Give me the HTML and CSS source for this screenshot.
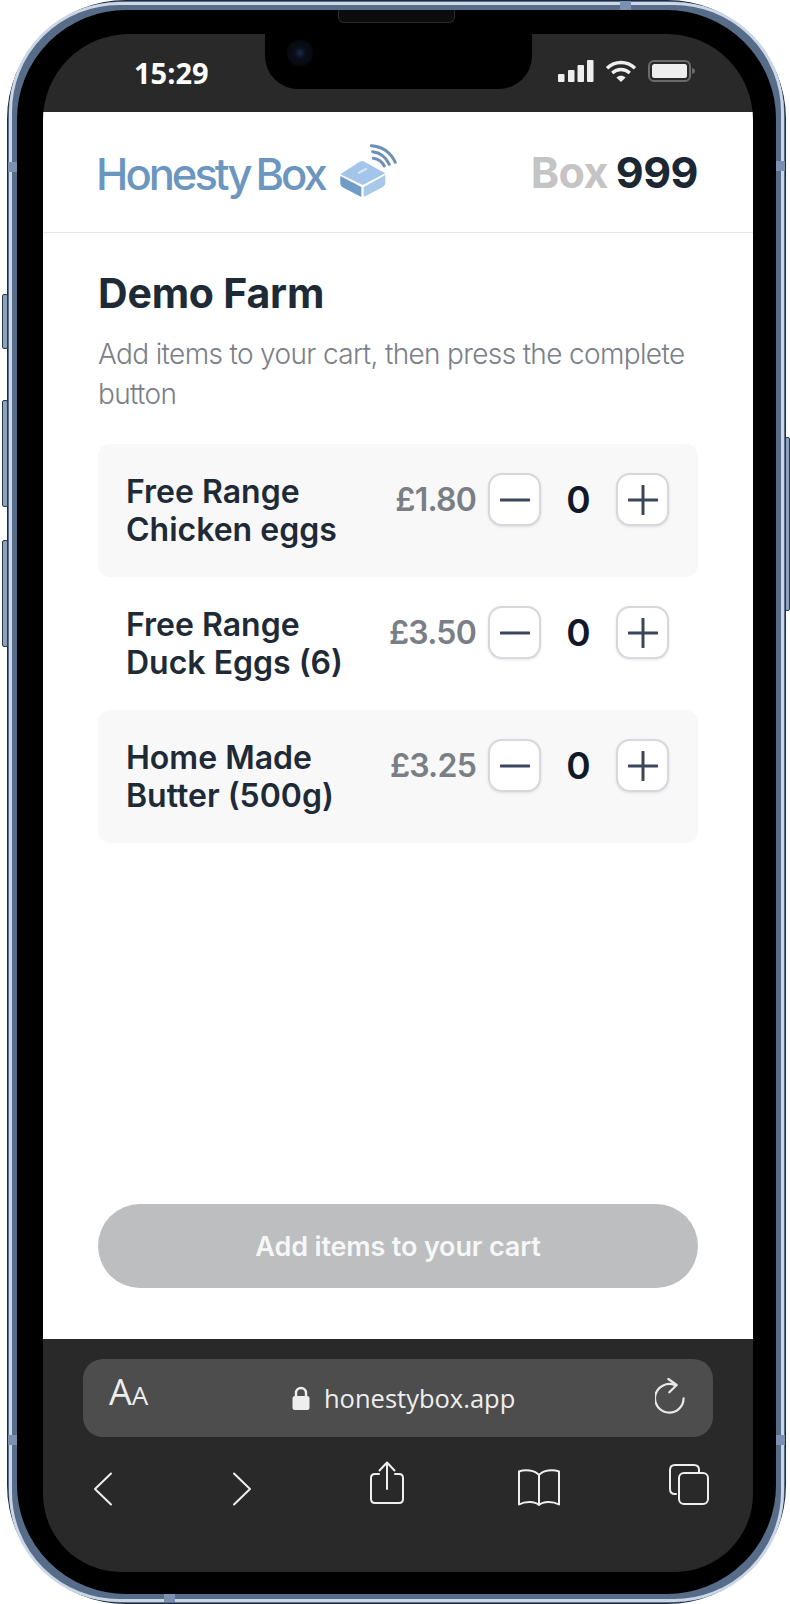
FILE: index.html
```html
<!DOCTYPE html>
<html lang="en">
<head>
  <meta charset="UTF-8">
  <title>Honesty Box</title>
  <link rel="stylesheet" href="styles.css">
</head>
<body>
  <div class="phone">
    <span class="side side-l1"></span>
    <span class="side side-l2"></span>
    <span class="side side-l3"></span>
    <span class="side side-r1"></span>
    <span class="band band-top"></span>
    <span class="band band-bottom"></span>
    <span class="band band-lt"></span>
    <span class="band band-lb"></span>
    <span class="band band-rt"></span>
    <span class="band band-rb"></span>
    <span class="speaker"></span>

    <div class="screen">
      <div class="status">
        <div class="status-left">15:29</div>
        <div class="notch"><span class="camera"></span></div>
        <div class="status-right">
          <svg width="36" height="22" viewBox="0 0 36 22" fill="#eeeeee">
            <rect x="0" y="14" width="6.5" height="8" rx="1"/>
            <rect x="10" y="10" width="6.5" height="12" rx="1"/>
            <rect x="19.5" y="5" width="6.5" height="17" rx="1"/>
            <rect x="29" y="0" width="6.5" height="22" rx="1"/>
          </svg>
          <svg width="32" height="22" viewBox="0 0 32 22" fill="none" stroke="#eeeeee" stroke-width="3.4">
            <path d="M2 8.2C10 0.6 22 0.6 30 8.2"/>
            <path d="M7.2 13C12.4 8.4 19.6 8.4 24.8 13"/>
            <path d="M16 22L11.4 17.4C14 15.2 18 15.2 20.6 17.4Z" fill="#eeeeee" stroke="none"/>
          </svg>
          <svg width="47" height="22" viewBox="0 0 47 22">
            <rect x="1" y="1" width="41" height="20" rx="5" fill="none" stroke="#6b6b6b" stroke-width="2"/>
            <rect x="4" y="4" width="35" height="14" rx="2.5" fill="#eeeeee"/>
            <path d="M44 8C46 8.5 47 9.6 47 11C47 12.4 46 13.5 44 14Z" fill="#6b6b6b"/>
          </svg>
        </div>
      </div>

      <div class="page">
        <header class="top">
          <div class="logo">
            <span class="logo-text">Honesty<span class="logo-gap">Box</span></span>
            <svg class="logo-mark" width="58" height="56" viewBox="-1 0 58 56">
              <path d="M-0.7 30.300L19 17.500Q21 16.500 23 17.500L44.300 29.300L21.700 41Z" fill="#a3c5ea"/>
              <path d="M-0.7 32L20.300 43V53L2 43.500Q-0.7 42 -0.7 39Z" fill="#6f9bc6"/>
              <path d="M22.700 43L44.300 31V39Q44.300 41.500 42 43L22.700 53Z" fill="#a9c9ea"/>
              <path d="M18 28.700L25 25" stroke="#d8e4f0" stroke-width="2.4" stroke-linecap="round"/>
              <g fill="none" stroke="#6d8fb3" stroke-width="3" stroke-linecap="round">
                <path d="M32.300 14.300Q40 15.500 43.300 22"/>
                <path d="M31.700 7.700Q43 9 48.300 20.300"/>
                <path d="M30.300 1.700Q47 3 54.300 18.300"/>
              </g>
            </svg>
          </div>
          <div class="box-id"><span class="box-word">Box</span> 999</div>
        </header>

        <main class="content">
          <h1 class="farm">Demo Farm</h1>
          <p class="hint">Add items to your cart, then press the complete button</p>

          <div class="items">
            <div class="item item-alt">
              <div class="item-name">Free Range Chicken eggs</div>
              <div class="item-price">£1.80</div>
              <button class="step"><svg width="30" height="30" viewBox="0 0 30 30"><path d="M1 15H29"/></svg></button>
              <div class="qty">0</div>
              <button class="step"><svg width="30" height="30" viewBox="0 0 30 30"><path d="M1 15H29M15 1V29"/></svg></button>
            </div>
            <div class="item">
              <div class="item-name">Free Range Duck Eggs (6)</div>
              <div class="item-price">£3.50</div>
              <button class="step"><svg width="30" height="30" viewBox="0 0 30 30"><path d="M1 15H29"/></svg></button>
              <div class="qty">0</div>
              <button class="step"><svg width="30" height="30" viewBox="0 0 30 30"><path d="M1 15H29M15 1V29"/></svg></button>
            </div>
            <div class="item item-alt">
              <div class="item-name">Home Made Butter (500g)</div>
              <div class="item-price">£3.25</div>
              <button class="step"><svg width="30" height="30" viewBox="0 0 30 30"><path d="M1 15H29"/></svg></button>
              <div class="qty">0</div>
              <button class="step"><svg width="30" height="30" viewBox="0 0 30 30"><path d="M1 15H29M15 1V29"/></svg></button>
            </div>
          </div>

          <button class="complete">Add items to your cart</button>
        </main>
      </div>

      <div class="browser">
        <div class="address">
          <div class="aa"><span class="aa-big">A</span><span class="aa-small">A</span></div>
          <div class="url">
            <svg width="18" height="24" viewBox="0 0 18 24">
              <path d="M4 11V7a5 5 0 0 1 10 0V11" fill="none" stroke="#eeeeee" stroke-width="2.4"/>
              <rect x="0.5" y="10" width="17" height="14" rx="2.5" fill="#eeeeee"/>
            </svg>
            <span>honestybox.app</span>
          </div>
          <svg width="32" height="40" viewBox="0 0 32 40" fill="none" stroke="#e8e8e8" stroke-width="2.2" stroke-linecap="round" stroke-linejoin="round">
            <path d="M20 7.200A14.300 14.300 0 1 0 28.600 20.300"/>
            <path d="M13.300 1L21.700 7L14.300 14.300"/>
          </svg>
        </div>
        <div class="tools">
          <svg class="tool-back" width="20" height="34" viewBox="0 0 20 34"><path d="M18 1.500L2 17L18 32.500"/></svg>
          <svg class="tool-forward" width="20" height="34" viewBox="0 0 20 34"><path d="M2 1.500L18 17L2 32.500"/></svg>
          <svg class="tool-share" width="36" height="44" viewBox="0 0 36 44"><path d="M18 28V2M10.500 9.500L18 1.500L25.500 9.500M10 13H6Q2 13 2 17V38Q2 42 6 42H30Q34 42 34 38V17Q34 13 30 13H26"/></svg>
          <svg class="tool-book" width="44" height="38" viewBox="0 0 44 38"><path d="M22 7C18 2 8 1 2 3.500V36.500C8 33 18 33 22 37C26 33 36 33 42 36.500V3.500C36 1 26 2 22 7ZM22 7V37"/></svg>
          <svg class="tool-tabs" width="40" height="41" viewBox="0 0 40 41"><path d="M7 30H6Q1 30 1 25V6Q1 1 6 1H25Q30 1 30 6V9"/><rect x="10" y="9" width="29" height="31" rx="5"/></svg>
        </div>
      </div>
    </div>
  </div>
</body>
</html>
```

FILE: styles.css
```css
html, body {
  width: 790px;
  height: 1604px;
  margin: 0;
  background: #ffffff;
  font-family: Inter, "Liberation Sans", sans-serif;
}

.phone {
  position: relative;
  box-sizing: border-box;
  width: 777px;
  height: 1602px;
  margin: 1px 0 0 8px;
  padding: 24px 23px 22px 26px;
  background: #000000;
  border: 9px solid #566c88;
  border-radius: 118px;
  box-shadow: 0 0 0 1px #1d2b3d;
}

.phone::before {
  content: "";
  position: absolute;
  top: -8px;
  left: -8px;
  right: -8px;
  bottom: -8px;
  border: 3px solid #cbd7e6;
  border-radius: 110px;
}

/* side buttons and antenna bands */
.side {
  position: absolute;
  width: 6px;
  background: #8ea1b9;
  border: 1px solid #2c3a4d;
  box-sizing: border-box;
  border-radius: 2px;
}

.side-l1 { left: -15px; top: 284px; height: 55px; }
.side-l2 { left: -15px; top: 390px; height: 107px; }
.side-l3 { left: -15px; top: 530px; height: 107px; }
.side-r1 { right: -14px; top: 427px; height: 174px; width: 5px; }

.band {
  position: absolute;
  background: #7c90b2;
}

.band-top { top: -9px; left: 603px; width: 11px; height: 9px; }
.band-bottom { bottom: -8px; left: 147px; width: 11px; height: 8px; }
.band-lt { left: -9px; top: 152px; width: 9px; height: 10px; }
.band-lb { left: -9px; top: 1425px; width: 9px; height: 10px; }
.band-rt { right: -9px; top: 151px; width: 9px; height: 10px; }
.band-rb { right: -9px; top: 1425px; width: 9px; height: 10px; }

.speaker {
  position: absolute;
  top: 0;
  left: 321px;
  width: 117px;
  height: 13px;
  background: #0c0c0c;
  border: 1px solid #2a2a2a;
  border-top: 0;
  border-radius: 0 0 6px 6px;
  box-sizing: border-box;
}

.screen {
  display: flex;
  flex-direction: column;
  width: 710px;
  height: 1538px;
  background: #292929;
  border-radius: 86px 86px 78px 78px;
  overflow: hidden;
}

/* status bar */
.status {
  display: flex;
  height: 78px;
  flex: none;
}

.status-left {
  width: 222px;
  padding: 19px 0 0 91px;
  box-sizing: border-box;
  font-family: "Open Sans", sans-serif;
  font-weight: 700;
  font-size: 29px;
  line-height: 40px;
  color: #ffffff;
}

.notch {
  display: flex;
  align-items: flex-start;
  width: 267px;
  height: 55px;
  background: #000000;
  border-radius: 0 0 33px 33px;
}

.camera {
  width: 26px;
  height: 26px;
  margin: 6px 0 0 22px;
  border-radius: 50%;
  background: radial-gradient(circle, #1d2a4d 0, #0a0e18 30%, #040508 100%);
}

.status-right {
  display: flex;
  align-items: flex-start;
  gap: 11px;
  padding: 26px 0 0 26px;
}

/* page */
.page {
  display: flex;
  flex-direction: column;
  height: 1227px;
  flex: none;
  background: #ffffff;
}

.top {
  display: flex;
  align-items: center;
  justify-content: space-between;
  height: 121px;
  padding: 0 55px;
  box-sizing: border-box;
  border-bottom: 1px solid #e5e6e8;
}

.logo {
  display: flex;
  align-items: flex-start;
}

.logo-text {
  margin: 3px 0 0 -2px;
  font-weight: 500;
  font-size: 43.5px;
  line-height: 54px;
  letter-spacing: -3px;
  color: #6b96c0;
}

.logo-gap {
  margin-left: 6px;
}

.logo-mark {
  margin: 0 0 0 15px;
}

.box-id {
  font-weight: 700;
  font-size: 43px;
  letter-spacing: -0.5px;
  word-spacing: -2px;
  color: #1b2733;
}

.box-word {
  color: #c4c4c4;
}

.content {
  display: flex;
  flex-direction: column;
  flex: 1;
  padding: 0 55px 51px;
}

.farm {
  margin: 32px 0 0;
  font-weight: 700;
  font-size: 41px;
  line-height: 56px;
  letter-spacing: -0.2px;
  color: #1f2a37;
}

.hint {
  margin: 13px 0 0;
  font-weight: 300;
  font-size: 28px;
  line-height: 40px;
  letter-spacing: -0.65px;
  color: #7b8088;
}

.items {
  margin-top: 30px;
}

.item {
  display: flex;
  align-items: flex-start;
  height: 133px;
  padding: 29px 28px 0;
  box-sizing: border-box;
  border-radius: 12px;
}

.item-alt {
  background: #f8f8f9;
}

.item-name {
  width: 240px;
  flex: none;
  font-weight: 600;
  font-size: 32px;
  line-height: 38px;
  color: #1f2a37;
}

.item-price {
  width: 110px;
  flex: none;
  margin-right: 12px;
  text-align: right;
  font-weight: 600;
  font-size: 32px;
  line-height: 54px;
  letter-spacing: -0.8px;
  color: #7a7f86;
}

.step {
  display: flex;
  align-items: center;
  justify-content: center;
  width: 53px;
  height: 53px;
  padding: 0;
  background: #ffffff;
  border: 2px solid #d6d8dc;
  border-radius: 14px;
  box-shadow: 0 1px 3px rgba(0, 0, 0, 0.1);
}

.step path {
  fill: none;
  stroke: #3b4658;
  stroke-width: 3;
  stroke-linecap: round;
}

.qty {
  width: 75px;
  text-align: center;
  font-weight: 600;
  font-size: 37px;
  line-height: 54px;
  color: #111827;
}

.complete {
  width: 600px;
  height: 84px;
  margin-top: auto;
  background: #bcbec0;
  border: 0;
  border-radius: 42px;
  font-family: Inter, sans-serif;
  font-weight: 600;
  font-size: 27px;
  letter-spacing: -0.15px;
  color: #f6f7f7;
}

/* browser chrome */
.browser {
  flex: 1;
  padding: 20px 40px 0;
}

.address {
  display: flex;
  align-items: center;
  justify-content: space-between;
  height: 78px;
  padding: 0 26px;
  background: #4d4d4d;
  border-radius: 20px;
  box-sizing: border-box;
}

.aa {
  margin-top: -14px;
  font-family: "Open Sans", sans-serif;
  color: #eeeeee;
}

.aa-big {
  font-size: 36px;
}

.aa-small {
  font-size: 26px;
}

.url {
  display: flex;
  align-items: center;
  gap: 14px;
  margin-left: 4px;
  font-family: "Open Sans", sans-serif;
  font-size: 25.5px;
  color: #eeeeee;
}

.tools {
  display: flex;
  align-items: flex-start;
  margin: 24px 0 0 10px;
}

.tools svg {
  flex: none;
  fill: none;
  stroke: #eeeeee;
  stroke-width: 2;
  stroke-linecap: round;
  stroke-linejoin: round;
}

.tool-back { margin-top: 11px; }
.tool-forward { margin: 11px 0 0 119px; }
.tool-share { margin-left: 117px; }
.tool-book { margin: 7px 0 0 112px; }
.tool-tabs { margin: 3px 0 0 108px; }
```
